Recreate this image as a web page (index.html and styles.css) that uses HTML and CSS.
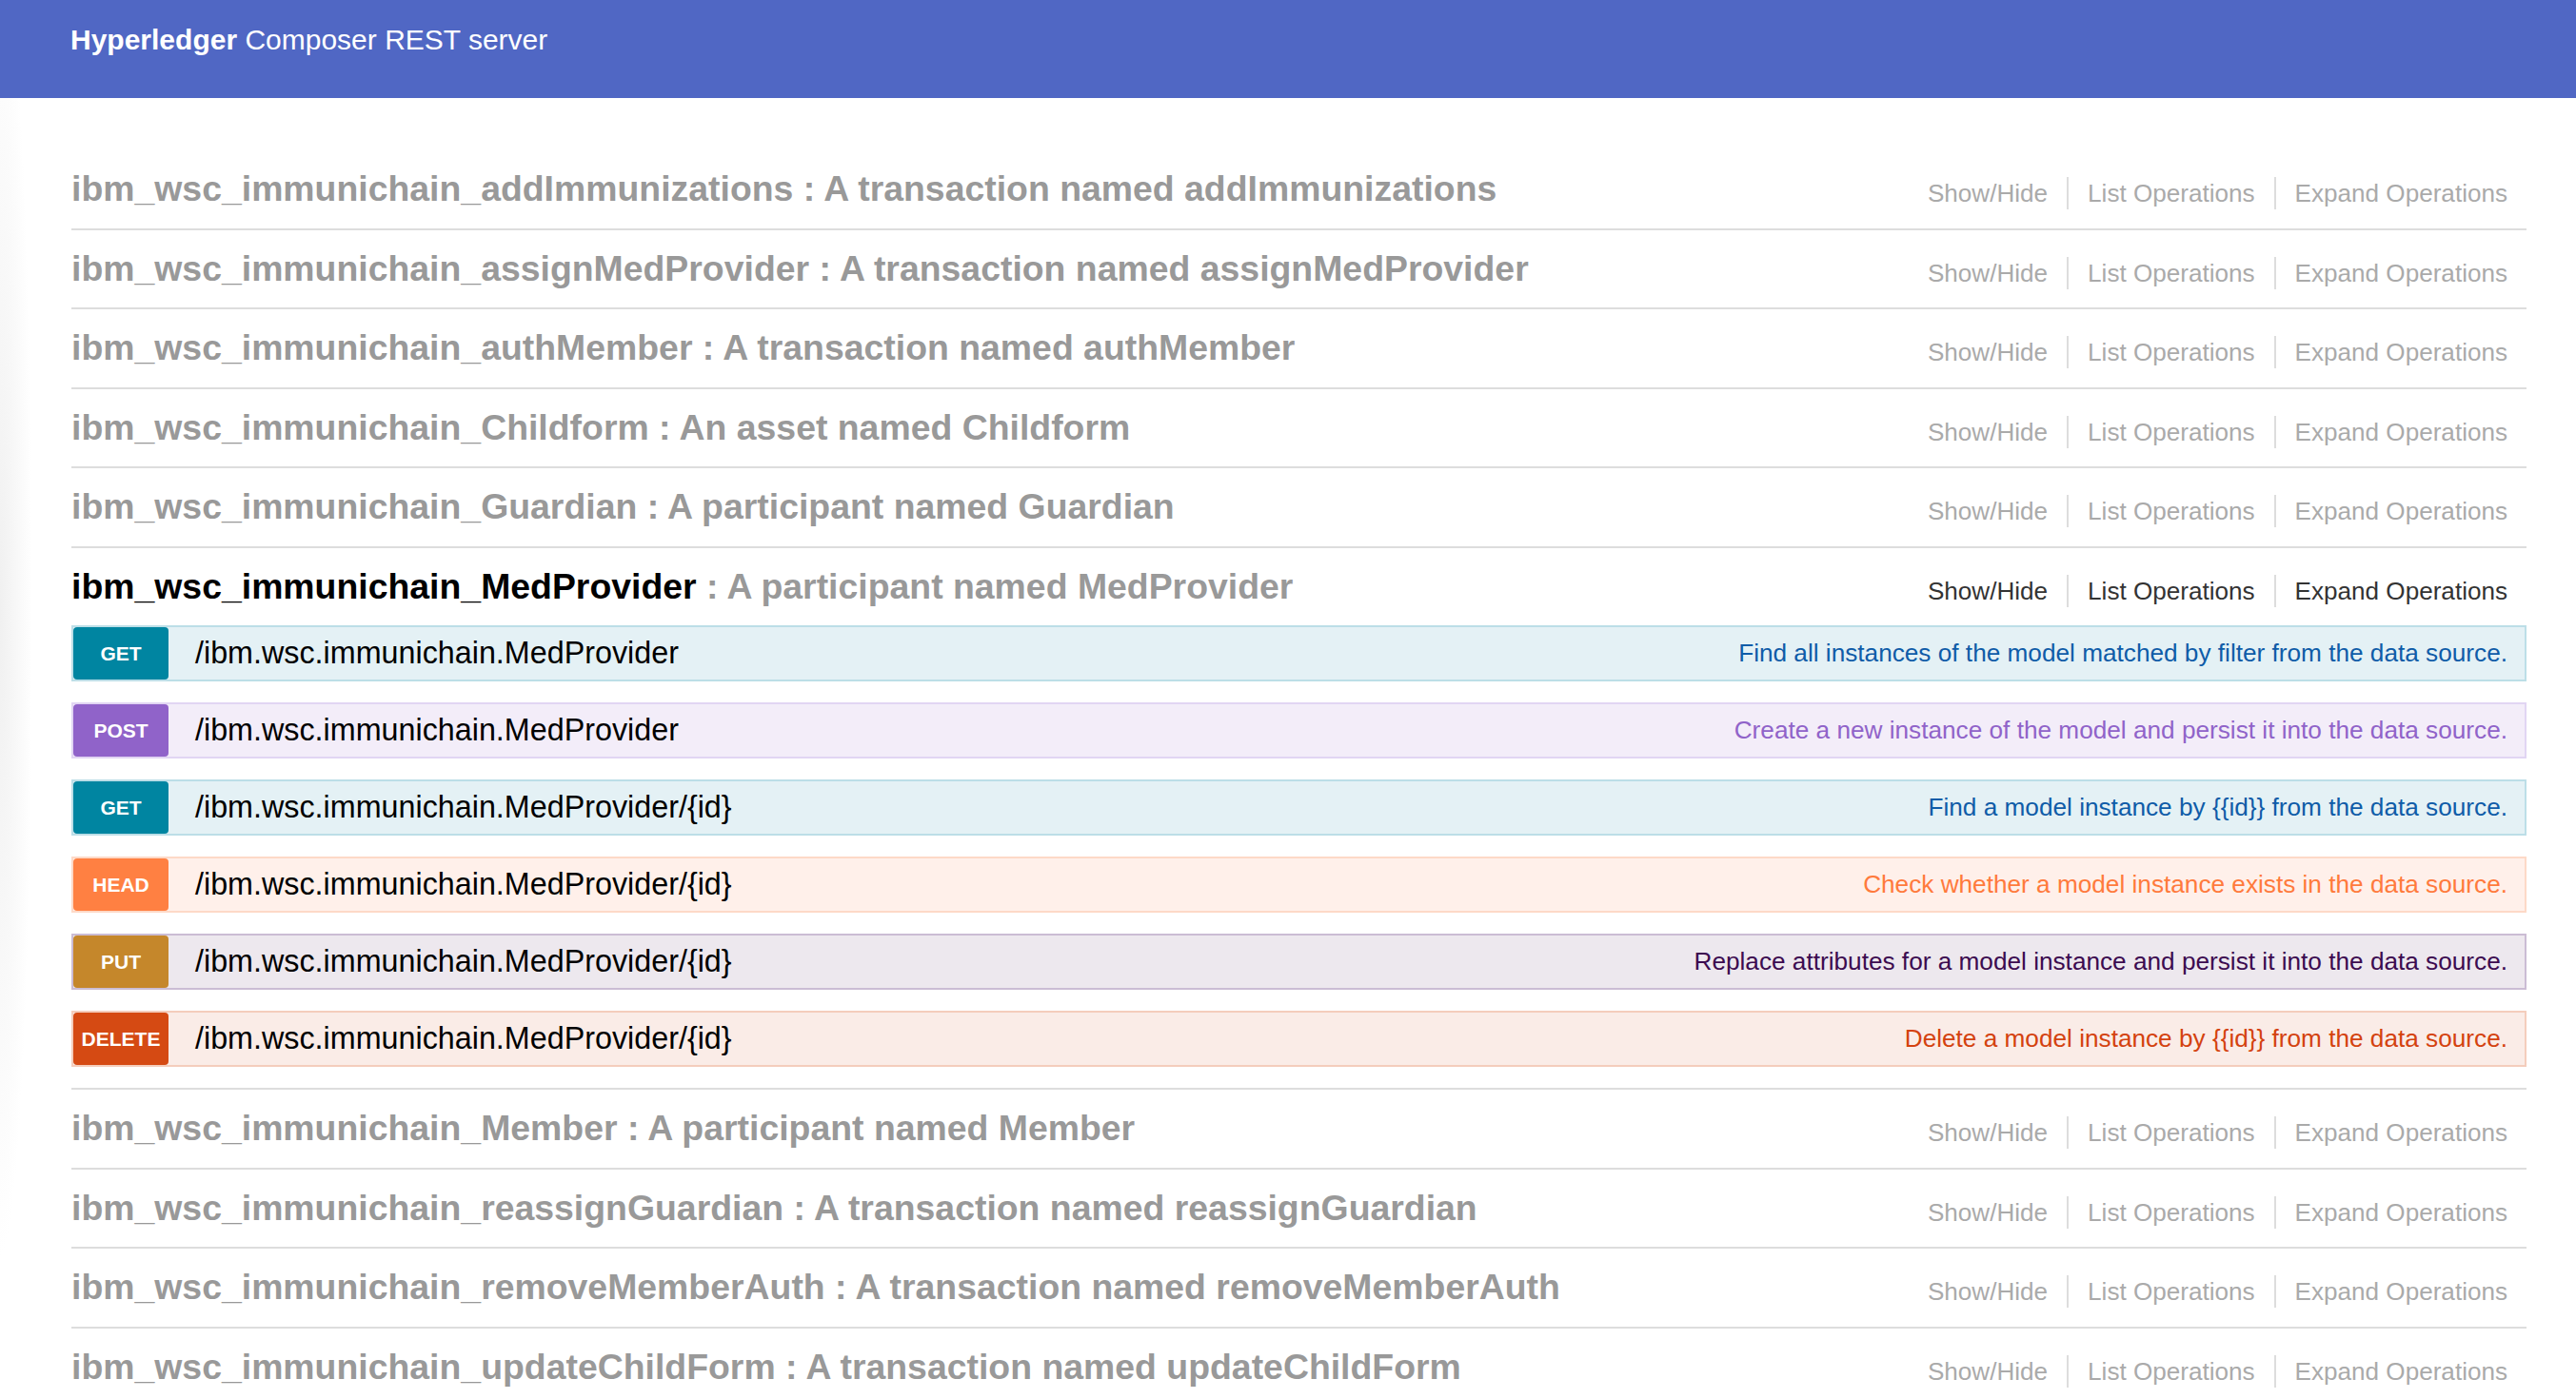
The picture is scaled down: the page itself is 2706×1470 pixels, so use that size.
FILE: index.html
```html
<!DOCTYPE html>
<html lang="en">
<head>
<meta charset="utf-8">
<title>Hyperledger Composer REST server</title>
<link rel="stylesheet" href="styles.css">
</head>
<body>
<div class="header">
  <a class="logo"><b>Hyperledger</b> Composer REST server</a>
</div>
<div class="wrap">
  <ul class="resources">
    <li class="resource">
      <div class="res-heading">
        <h2><a class="name">ibm_wsc_immunichain_addImmunizations</a><span class="sum"> : A transaction named addImmunizations</span></h2>
        <ul class="options"><li><a>Show/Hide</a></li><li><a>List Operations</a></li><li><a>Expand Operations</a></li></ul>
      </div>
    </li>
    <li class="resource">
      <div class="res-heading">
        <h2><a class="name">ibm_wsc_immunichain_assignMedProvider</a><span class="sum"> : A transaction named assignMedProvider</span></h2>
        <ul class="options"><li><a>Show/Hide</a></li><li><a>List Operations</a></li><li><a>Expand Operations</a></li></ul>
      </div>
    </li>
    <li class="resource">
      <div class="res-heading">
        <h2><a class="name">ibm_wsc_immunichain_authMember</a><span class="sum"> : A transaction named authMember</span></h2>
        <ul class="options"><li><a>Show/Hide</a></li><li><a>List Operations</a></li><li><a>Expand Operations</a></li></ul>
      </div>
    </li>
    <li class="resource">
      <div class="res-heading">
        <h2><a class="name">ibm_wsc_immunichain_Childform</a><span class="sum"> : An asset named Childform</span></h2>
        <ul class="options"><li><a>Show/Hide</a></li><li><a>List Operations</a></li><li><a>Expand Operations</a></li></ul>
      </div>
    </li>
    <li class="resource">
      <div class="res-heading">
        <h2><a class="name">ibm_wsc_immunichain_Guardian</a><span class="sum"> : A participant named Guardian</span></h2>
        <ul class="options"><li><a>Show/Hide</a></li><li><a>List Operations</a></li><li><a>Expand Operations</a></li></ul>
      </div>
    </li>
    <li class="resource active">
      <div class="res-heading">
        <h2><a class="name">ibm_wsc_immunichain_MedProvider</a><span class="sum"> : A participant named MedProvider</span></h2>
        <ul class="options"><li><a>Show/Hide</a></li><li><a>List Operations</a></li><li><a>Expand Operations</a></li></ul>
      </div>
      <ul class="operations">
        <li class="op get">
          <span class="method">GET</span>
          <span class="path">/ibm.wsc.immunichain.MedProvider</span>
          <span class="desc">Find all instances of the model matched by filter from the data source.</span>
        </li>
        <li class="op post">
          <span class="method">POST</span>
          <span class="path">/ibm.wsc.immunichain.MedProvider</span>
          <span class="desc">Create a new instance of the model and persist it into the data source.</span>
        </li>
        <li class="op get">
          <span class="method">GET</span>
          <span class="path">/ibm.wsc.immunichain.MedProvider/{id}</span>
          <span class="desc">Find a model instance by {{id}} from the data source.</span>
        </li>
        <li class="op head">
          <span class="method">HEAD</span>
          <span class="path">/ibm.wsc.immunichain.MedProvider/{id}</span>
          <span class="desc">Check whether a model instance exists in the data source.</span>
        </li>
        <li class="op put">
          <span class="method">PUT</span>
          <span class="path">/ibm.wsc.immunichain.MedProvider/{id}</span>
          <span class="desc">Replace attributes for a model instance and persist it into the data source.</span>
        </li>
        <li class="op delete">
          <span class="method">DELETE</span>
          <span class="path">/ibm.wsc.immunichain.MedProvider/{id}</span>
          <span class="desc">Delete a model instance by {{id}} from the data source.</span>
        </li>
      </ul>
    </li>
    <li class="resource">
      <div class="res-heading">
        <h2><a class="name">ibm_wsc_immunichain_Member</a><span class="sum"> : A participant named Member</span></h2>
        <ul class="options"><li><a>Show/Hide</a></li><li><a>List Operations</a></li><li><a>Expand Operations</a></li></ul>
      </div>
    </li>
    <li class="resource">
      <div class="res-heading">
        <h2><a class="name">ibm_wsc_immunichain_reassignGuardian</a><span class="sum"> : A transaction named reassignGuardian</span></h2>
        <ul class="options"><li><a>Show/Hide</a></li><li><a>List Operations</a></li><li><a>Expand Operations</a></li></ul>
      </div>
    </li>
    <li class="resource">
      <div class="res-heading">
        <h2><a class="name">ibm_wsc_immunichain_removeMemberAuth</a><span class="sum"> : A transaction named removeMemberAuth</span></h2>
        <ul class="options"><li><a>Show/Hide</a></li><li><a>List Operations</a></li><li><a>Expand Operations</a></li></ul>
      </div>
    </li>
    <li class="resource">
      <div class="res-heading">
        <h2><a class="name">ibm_wsc_immunichain_updateChildForm</a><span class="sum"> : A transaction named updateChildForm</span></h2>
        <ul class="options"><li><a>Show/Hide</a></li><li><a>List Operations</a></li><li><a>Expand Operations</a></li></ul>
      </div>
    </li>
  </ul>
</div>
</body>
</html>
```
FILE: styles.css
```css
html, body {
  margin: 0;
  padding: 0;
}
body {
  font-family: "Liberation Sans", Arial, Helvetica, sans-serif;
  color: #000;
  background:
    radial-gradient(34px 680px at 0 640px, #f0f0f0 0%, rgba(255,255,255,0) 100%) no-repeat,
    #fff;
  min-height: 1470px;
}
.header {
  background: #5067c4;
  height: 103px;
  box-sizing: border-box;
  padding: 24px 0 0 74px;
}
.logo {
  color: #fff;
  font-size: 30px;
  line-height: 36px;
  text-decoration: none;
}
.logo b {
  font-weight: bold;
}
.wrap {
  padding: 55px 52px 0 75px;
}
ul, li {
  list-style: none;
  margin: 0;
  padding: 0;
}
.resource {
  border-bottom: 2px solid #dddddd;
}
.res-heading {
  display: flex;
  justify-content: space-between;
  align-items: flex-start;
  height: 81.5px;
}
.res-heading h2 {
  margin: 0;
  padding: 19px 0;
  font-size: 37.4px;
  line-height: 43px;
  font-weight: bold;
  color: #999;
  white-space: nowrap;
}
.res-heading .name {
  color: #999;
}
.resource.active .res-heading .name {
  color: #000;
}
.options {
  display: flex;
  margin-top: 28px;
}
.options li a {
  display: block;
  padding: 0 20px;
  font-size: 26.1px;
  line-height: 34px;
  color: #aaa;
  border-right: 2px solid #dddddd;
}
.options li:last-child a {
  border-right: none;
}
.resource.active .options li a {
  color: #333;
}
.op {
  display: flex;
  align-items: center;
  height: 59px;
  box-sizing: border-box;
  border: 2px solid;
  margin-bottom: 22px;
}
.method {
  width: 100px;
  height: 55px;
  border-radius: 4px;
  display: flex;
  align-items: center;
  justify-content: center;
  color: #fff;
  font-weight: bold;
  font-size: 21px;
  flex: none;
}
.path {
  margin-left: 28px;
  font-size: 32.3px;
  color: #000;
  white-space: nowrap;
}
.desc {
  margin-left: auto;
  padding-right: 18px;
  font-size: 26.2px;
  white-space: nowrap;
}
.op.get { background: #e4f1f5; border-color: #bcdee7; }
.op.get .method { background: #0085a1; }
.op.get .desc { color: #0f5ca8; }
.op.post { background: #f3edf9; border-color: #e1d5f3; }
.op.post .method { background: #9063c9; }
.op.post .desc { color: #9063c9; }
.op.head { background: #fff0ea; border-color: #fdd9c7; }
.op.head .method { background: #ff8042; }
.op.head .desc { color: #ff7a3c; }
.op.put { background: #ede8ee; border-color: #cbbcd4; }
.op.put .method { background: #c5872b; }
.op.put .desc { color: #3c0b50; }
.op.delete { background: #faece7; border-color: #f4cdbc; }
.op.delete .method { background: #d54a13; }
.op.delete .desc { color: #d4420f; }
```
